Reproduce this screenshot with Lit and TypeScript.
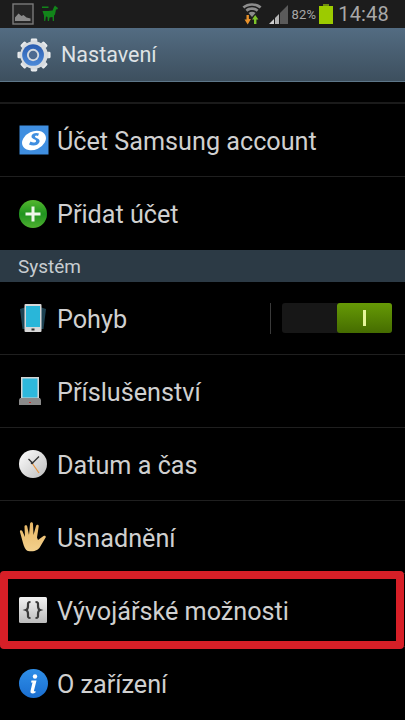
import { LitElement, html, css, svg } from 'lit';
import { customElement } from 'lit/decorators.js';

const galleryIcon = html`<svg width="22" height="22" viewBox="0 0 22 22">
  <rect x="1" y="1" width="20" height="20" fill="#262626" stroke="#7a7a7a" stroke-width="1.4"/>
  <path d="M3 18v-3.500l3.500-4 3 2.500 2-1 3 2.500 4 1V18z" fill="#8a8a8a"/>
</svg>`;

const llamaIcon = html`<svg width="18" height="18" viewBox="0 0 18 18">
  <path d="M1 1.500h6.500v1.500H1zM1.500 6h5.500l4.500-.5L13 2l1-1.500 1 1 2 1.500-.5 1.200-1.500.3-1 5-1 1v5.500h-1.200l-.3-4-3 .5-.5 3.500h-1.200l-.3-4-1.500-.5-.8 4.500H3.200L3 10.500z" fill="#12851a"/>
</svg>`;

const wifiIcon = html`<svg width="20" height="22" viewBox="0 0 20 22">
  <path d="M0.500 3.500C5.500-1 14.500-1 19.500 3.500l-1.800 2C13.500 1.800 6.500 1.800 2.300 5.500z" fill="#8c8c8c"/>
  <path d="M3.500 6.700c3.500-3.200 9.500-3.200 13 0l-1.800 2c-2.500-2.300-6.900-2.300-9.400 0z" fill="#8c8c8c"/>
  <path d="M6.500 9.900c2-1.600 5-1.600 7 0L10 14z" fill="#8c8c8c"/>
  <path d="M4.500 12h2.400v4h2L5.700 21.500 2.500 16.500h2z" fill="#e8912a"/>
  <path d="M12 21v-4.500h-2l3.200-4.500 3.200 4.500h-2V21z" fill="#7dc42a"/>
</svg>`;

const signalIcon = html`<svg width="19" height="19" viewBox="0 0 19 19">
  <path d="M0 19l5-5v5z" fill="#cfcfcf"/>
  <path d="M6 19v-6l4-4v10z" fill="#cfcfcf" opacity=".85"/>
  <path d="M11 19V8l8-8v19z" fill="#5a5a5a"/>
</svg>`;

const batteryIcon = html`<svg width="14" height="20" viewBox="0 0 14 20">
  <rect x="4" y="0" width="6" height="2" fill="#6f8f10"/>
  <rect x="0" y="2" width="14" height="18" fill="#9ccb00"/>
</svg>`;

const gearTeeth = Array.from({ length: 8 }, (_, i) =>
  svg`<rect x="14.500" y="0.500" width="7" height="8" rx="1.500" fill="url(#gr)" transform="rotate(${i * 45} 18 18)"/>`);

const gearIcon = html`<svg width="34" height="34" viewBox="0 0 36 36">
  <defs>
    <linearGradient id="gr" x1="0" y1="0" x2="0" y2="1"><stop offset="0" stop-color="#f2f4f6"/><stop offset="1" stop-color="#a9b0b8"/></linearGradient>
    <linearGradient id="bl" x1="0" y1="0" x2="0" y2="1"><stop offset="0" stop-color="#2a5cb0"/><stop offset="1" stop-color="#4d8ad8"/></linearGradient>
  </defs>
  ${gearTeeth}
  <circle cx="18" cy="18" r="14.500" fill="#d8dce0"/>
  <circle cx="17" cy="18" r="11.500" fill="url(#bl)"/>
  <circle cx="17" cy="18" r="6.500" fill="#d4d9de"/>
  <circle cx="17" cy="18" r="4.500" fill="#4d6a90"/>
</svg>`;

const samsungIcon = html`<svg width="30" height="30" viewBox="0 0 30 30">
  <rect x="0.500" y="0.500" width="29" height="29" fill="#3f8ee0"/>
  <ellipse cx="15" cy="15.500" rx="12.500" ry="9" fill="#fff" transform="rotate(-25 15 15.500)"/>
  <path d="M20 8.500c-2.500-1.300-7-.5-7.500 2.500-.5 3.500 5.500 3 4.500 5.500-.6 1.400-3.500 1.300-5.500 0l-1.500 3c3.500 1.500 9 1.500 10.500-2.500 1.200-4-5-3.800-4.500-5.800.3-1 2-1 3-.2z" fill="#3f8ee0"/>
</svg>`;

const plusIcon = html`<svg width="28" height="28" viewBox="0 0 28 28">
  <defs><linearGradient id="pl" x1="0" y1="0" x2="0" y2="1"><stop offset="0" stop-color="#55b82e"/><stop offset=".5" stop-color="#1f9420"/><stop offset="1" stop-color="#50b030"/></linearGradient></defs>
  <circle cx="14" cy="14" r="14" fill="url(#pl)"/>
  <path d="M12.500 6.500h3v6h6v3h-6v6h-3v-6h-6v-3h6z" fill="#eef6ea"/>
</svg>`;

const motionIcon = html`<svg width="28" height="28" viewBox="0 0 28 28">
  <path d="M1 5l6-2v22l-3.500 0z" fill="#1d4252"/>
  <path d="M27 5l-6-2v22l3.500 0z" fill="#1d4252"/>
  <rect x="5.500" y="0" width="17" height="28" rx="1" fill="#d8d8d8"/>
  <rect x="7" y="2" width="14" height="21" fill="#29b6d9"/>
  <rect x="12.500" y="24.500" width="3" height="2" fill="#333"/>
</svg>`;

const dockIcon = html`<svg width="22" height="28" viewBox="0 0 22 28">
  <rect x="2" y="0" width="18" height="22" fill="#d4d4d4"/>
  <rect x="3.500" y="1.500" width="15" height="19" fill="#2eb8dc"/>
  <path d="M1 21h20l1 2v5H0v-5z" fill="#8a8a8a"/>
  <rect x="10" y="25" width="2" height="1" fill="#c03030"/>
</svg>`;

const clockIcon = html`<svg width="28" height="28" viewBox="0 0 28 28">
  <defs><linearGradient id="cl" x1="0" y1="0" x2="1" y2="1"><stop offset="0" stop-color="#fff"/><stop offset="1" stop-color="#bdbdbd"/></linearGradient></defs>
  <circle cx="14" cy="14" r="14" fill="url(#cl)"/>
  <path d="M13 12.500L9.500 9M13 13.500l7-7" stroke="#333" stroke-width="1.300" fill="none"/>
  <path d="M13 13l7 10" stroke="#e8923a" stroke-width="1.200"/>
  <circle cx="13" cy="13" r="1.300" fill="#333"/>
</svg>`;

const handIcon = html`<svg width="28" height="30" viewBox="0 0 28 30">
  <defs><linearGradient id="hn" x1="0" y1="0" x2="0" y2="1"><stop offset="0" stop-color="#e8b765"/><stop offset="1" stop-color="#f3d08c"/></linearGradient></defs>
  <path d="M9 29c-3-1-4-5-5-8L1 10c-.5-2 1.500-2.500 2.300-1L6 15 5.500 5C5.300 3 8 2.700 8.300 4.800L10 13 11 2c.2-2.500 3-2.300 3 0l.5 11L17 4c.6-2 3-1.500 2.700.5L18 15.500l1 2.500 5.500-4c1.800-1 3 .7 1.800 2L21 25c-2 3-5 5-12 4z" fill="url(#hn)"/>
</svg>`;

const bracesIcon = html`<svg width="28" height="28" viewBox="0 0 28 28">
  <defs><linearGradient id="br" x1="0" y1="0" x2="0" y2="1"><stop offset="0" stop-color="#f2f2f2"/><stop offset="1" stop-color="#bcbcbc"/></linearGradient></defs>
  <rect width="28" height="26" y="1" rx="1.500" fill="url(#br)"/>
  <path d="M11.500 6c-3 0-2.500 1.500-2.500 4s-.5 3.500-2 4c1.500.5 2 1.500 2 4s-.5 4 2.500 4M16.500 6c3 0 2.500 1.500 2.500 4s.5 3.500 2 4c-1.500.5-2 1.500-2 4s.5 4-2.500 4" fill="none" stroke="#3a3a3a" stroke-width="2.200"/>
</svg>`;

const infoIcon = html`<svg width="29" height="29" viewBox="0 0 29 29">
  <defs><linearGradient id="in" x1="0" y1="0" x2="0" y2="1"><stop offset="0" stop-color="#2f8fe8"/><stop offset="1" stop-color="#1a6ed0"/></linearGradient></defs>
  <circle cx="14.500" cy="14.500" r="14.500" fill="url(#in)"/>
  <circle cx="16" cy="7.500" r="2.200" fill="#fff"/>
  <path d="M12.500 11.500h5L15 21.500c-.2 1 .5 1 1.500.5v1.500c-2 1.500-5.500 1.500-5-1.500l2-8.500h-1.500z" fill="#fff"/>
</svg>`;

@customElement('app-root')
export class AppRoot extends LitElement {
  static styles = css`
    :host {
      display: block;
      position: relative;
      width: 405px;
      height: 720px;
      overflow: hidden;
      background: #000;
      color: #d0d0d0;
      font-family: Roboto, "Liberation Sans", sans-serif;
    }

    .status {
      height: 28px;
      background: #1c1c1c;
      display: flex;
      align-items: center;
      padding: 0 16px 0 12px;
    }
    .status svg { display: block; }
    .status .llama { margin-left: 7px; }
    .status .spacer { flex: 1; }
    .status .signal { margin-left: 7px; }
    .status .pct { font-size: 13px; color: #a8a8a8; margin-left: 3px; letter-spacing: 0.2px; }
    .status .batt { margin-left: 3px; }
    .status .time { font-size: 20px; color: #a8a8a8; margin-left: 5px; letter-spacing: 0.2px; }

    .action {
      height: 54px;
      box-sizing: border-box;
      background: linear-gradient(#536c82, #3d4f5e);
      border-bottom: 1px solid #5d7688;
      display: flex;
      align-items: center;
      padding-left: 17px;
      gap: 10px;
      font-size: 21.5px;
      color: #dfe3e6;
    }
    .action svg { display: block; }

    .top-gap { height: 20px; border-bottom: 2px solid #1a1a1a; }

    .row {
      height: 73px;
      box-sizing: border-box;
      border-bottom: 1px solid #1f1f1f;
      display: flex;
      align-items: center;
      font-size: 25.2px;
    }
    .row.last { border-bottom: none; }
    .row .icon {
      width: 57px;
      padding-left: 19px;
      box-sizing: border-box;
      display: flex;
      flex: none;
    }
    .row .label { position: relative; top: 1px; }
    .row svg { display: block; }

    .section {
      height: 32px;
      background: #2c3a45;
      display: flex;
      align-items: center;
      padding-left: 18px;
      font-size: 19px;
      color: #c8cdd1;
    }

    .toggle-wrap {
      margin-left: auto;
      margin-right: 13px;
      display: flex;
      align-items: center;
    }
    .toggle-wrap .sep { width: 1px; height: 31px; background: #3a3a3a; margin-right: 11px; }
    .toggle {
      width: 110px;
      height: 30px;
      border-radius: 3px;
      background: #171717;
      display: flex;
      justify-content: flex-end;
    }
    .toggle .on {
      width: 55px;
      border-radius: 3px;
      background: linear-gradient(#669a06, #456c00);
      display: flex;
      align-items: center;
      justify-content: center;
    }
    .toggle .on i { width: 3px; height: 16px; background: #e6f59a; display: block; }

    .highlight {
      position: absolute;
      left: 0;
      top: 571px;
      width: 404px;
      height: 78px;
      box-sizing: border-box;
      border: 8px solid #d71f27;
      border-radius: 4px;
      pointer-events: none;
    }
  `;

  private row(icon: unknown, label: string, extra: unknown = null, last = false) {
    return html`<div class="row ${last ? 'last' : ''}">
      <div class="icon">${icon}</div>
      <span class="label">${label}</span>
      ${extra}
    </div>`;
  }

  render() {
    const toggle = html`<div class="toggle-wrap">
      <div class="sep"></div>
      <div class="toggle"><div class="on"><i></i></div></div>
    </div>`;

    return html`
      <div class="status">
        ${galleryIcon}
        <div class="llama">${llamaIcon}</div>
        <div class="spacer"></div>
        ${wifiIcon}
        <div class="signal">${signalIcon}</div>
        <span class="pct">82%</span>
        <div class="batt">${batteryIcon}</div>
        <span class="time">14:48</span>
      </div>
      <div class="action">${gearIcon}<span>Nastavení</span></div>
      <div class="top-gap"></div>
      ${this.row(samsungIcon, 'Účet Samsung account')}
      ${this.row(plusIcon, 'Přidat účet', null, true)}
      <div class="section">Systém</div>
      ${this.row(motionIcon, 'Pohyb', toggle)}
      ${this.row(dockIcon, 'Příslušenství')}
      ${this.row(clockIcon, 'Datum a čas')}
      ${this.row(handIcon, 'Usnadnění')}
      ${this.row(bracesIcon, 'Vývojářské možnosti')}
      ${this.row(infoIcon, 'O zařízení', null, true)}
      <div class="highlight"></div>
    `;
  }
}
